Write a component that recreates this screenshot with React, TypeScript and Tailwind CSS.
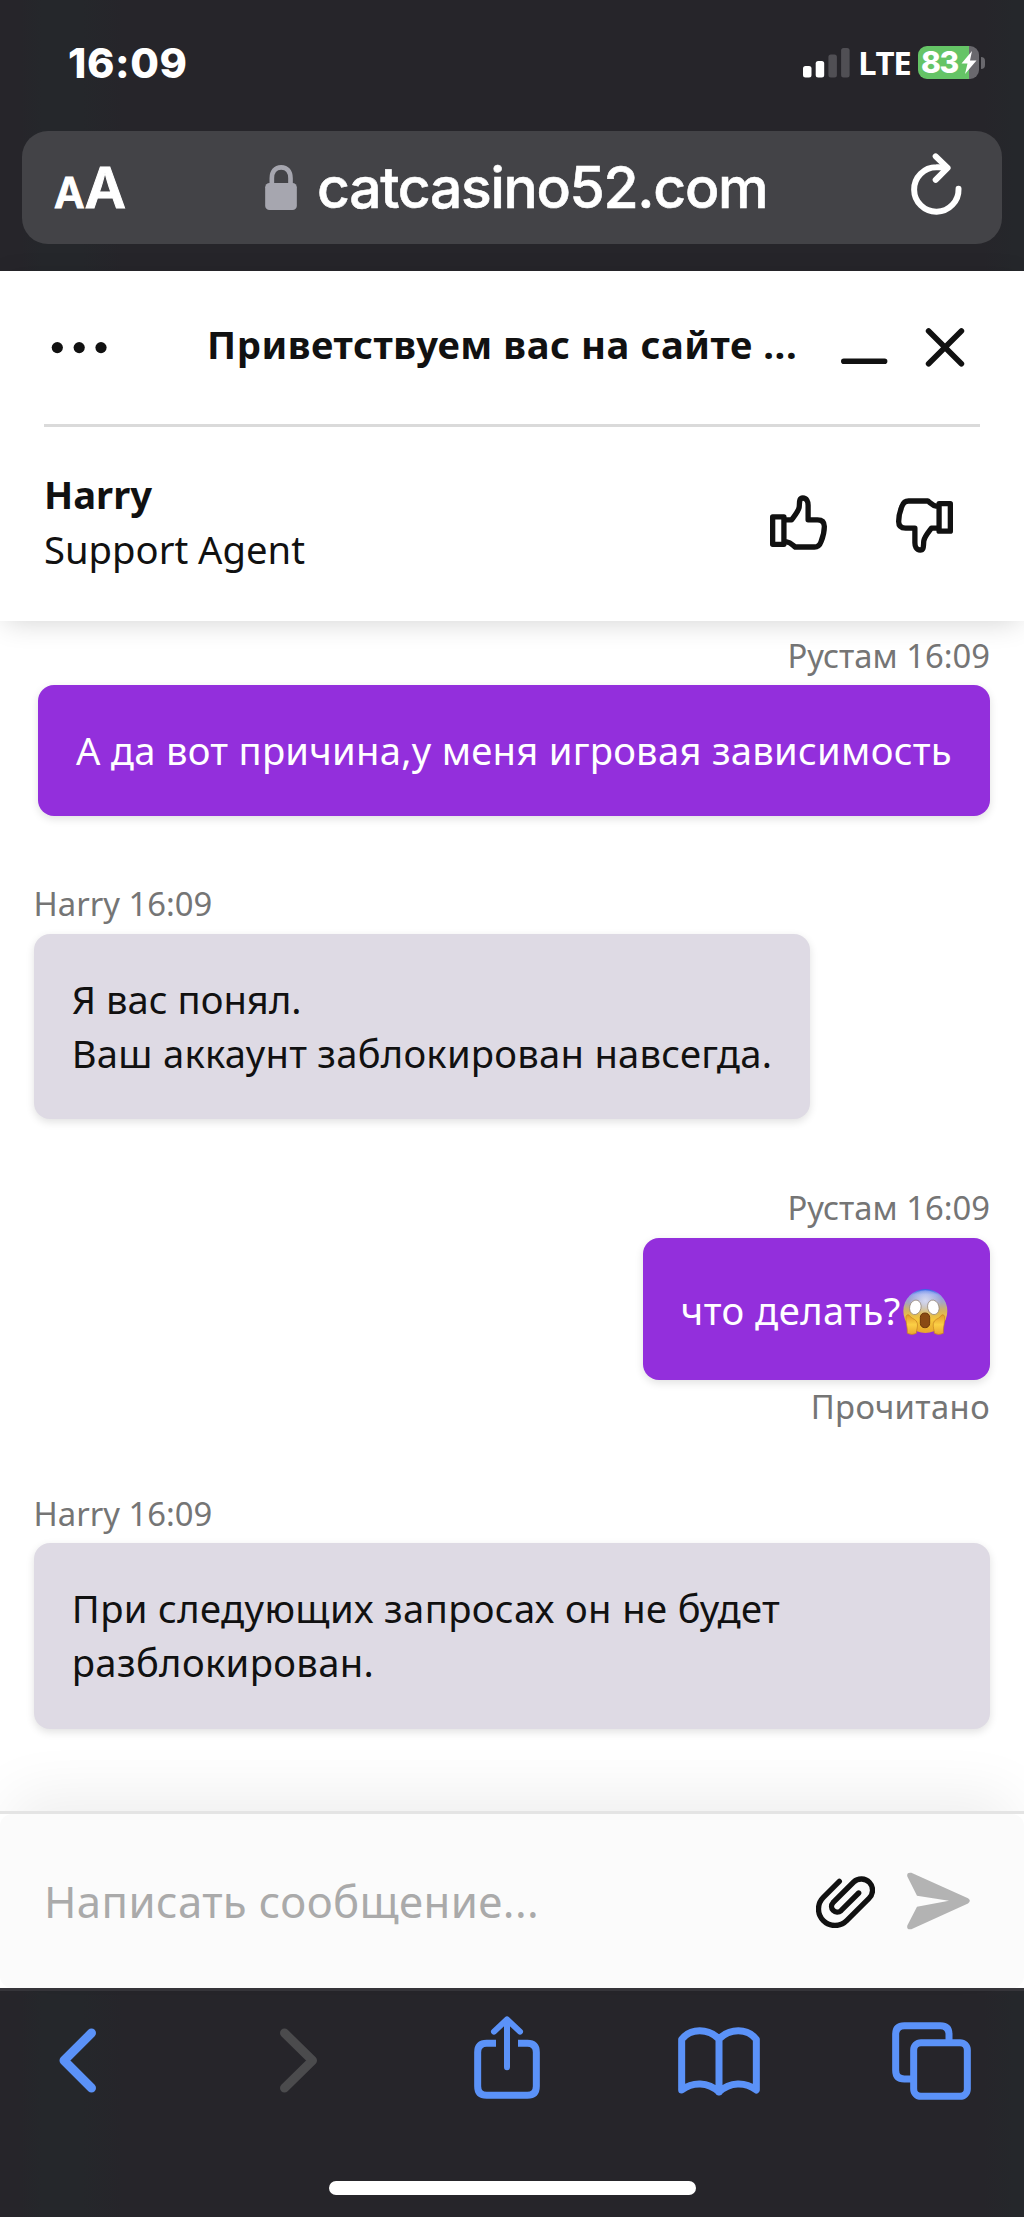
import type { ReactNode } from "react";

const chromeBg =
  "bg-[linear-gradient(to_right,#26252a_2%,#25272b_4%,#25272b_8%,#26252a_12%,#26252a_96%,#25272b_99%)]";

const StatusBar = () => (
  <div className="flex h-[131px] items-start font-['Inter',sans-serif] text-white">
    <span className="ml-[68px] mt-[38px] w-[200px] text-[41.5px] font-extrabold leading-[50px] tracking-[0.6px]">
      16:09
    </span>
    <svg className="ml-[535px] mt-12 h-[30px] w-[47px]" viewBox="0 0 47 30">
      <rect x="0" y="18" width="8.5" height="11.5" rx="2.5" fill="#fff" />
      <rect x="12.7" y="13" width="8.5" height="16.5" rx="2.5" fill="#fff" />
      <rect x="25.4" y="6.5" width="8.5" height="23" rx="2.5" fill="#504f54" />
      <rect x="38.1" y="0" width="8.5" height="29.5" rx="2.5" fill="#504f54" />
    </svg>
    <span className="ml-2 mt-[43px] w-[60px] font-['Open_Sans',sans-serif] text-[33px] font-bold leading-10 tracking-[-1.2px]">
      LTE
    </span>
    <div className="mt-[46px] flex h-[33px] w-[61px] items-center rounded-[9px] bg-[linear-gradient(to_right,#65c466_50.5px,#69686d_50.5px)]">
      <span className="ml-[3px] w-[40px] whitespace-nowrap text-[30px] font-extrabold leading-[37px] tracking-[-1.4px]">
        83
      </span>
      <svg className="h-[23px] w-4 shrink-0" viewBox="0 0 16 23">
        <path d="M11 0L0.5 12.5H6.5L4 23L15.5 9.5H9Z" fill="#fff" />
      </svg>
    </div>
    <div className="ml-[2px] mt-[57px] h-3 w-1 rounded-r-full bg-[#69686d]" />
  </div>
);

const AddressBar = () => (
  <div className="mx-[22px] flex h-[113px] items-start rounded-[26px] bg-[#434347] font-['Inter',sans-serif] text-white">
    <div className="ml-8 mt-[21px] flex w-[211px] items-baseline font-semibold leading-[72px]">
      <span className="text-[42px] [-webkit-text-stroke:1px_#fff]">A</span>
      <span className="text-[57px] [-webkit-text-stroke:1px_#fff]">A</span>
    </div>
    <svg className="mt-[34px] h-[45px] w-8" viewBox="0 0 95 135">
      <rect y="54" width="95" height="81" rx="13" fill="#a6a6af" />
      <path
        d="M20 60V40C20 20 30 7 48 7S76 20 76 40V60"
        fill="none"
        stroke="#a6a6af"
        strokeWidth="14"
      />
    </svg>
    <span className="ml-5 mt-[22px] w-[460px] whitespace-nowrap text-[57px] font-medium leading-[70px] tracking-[-1.3px] [-webkit-text-stroke:0.6px_#fff]">
      catcasino52.com
    </span>
    <svg
      className="ml-[134px] mt-[22px] h-[62px] w-[51px]"
      viewBox="0 0 153 187"
      fill="none"
      stroke="#fff"
      strokeWidth="18"
      strokeLinecap="round"
      strokeLinejoin="round"
    >
      <path d="M143 108A67 67 0 1 1 76 43Q92 42 106 45" />
      <path d="M74 10L110 45L74 81" />
    </svg>
  </div>
);

const ThumbIcon = ({ className }: { className: string }) => (
  <svg
    className={className}
    viewBox="0 0 172 164"
    fill="none"
    stroke="#111"
    strokeWidth="16"
    strokeLinejoin="round"
  >
    <rect x="8" y="65" width="34" height="83" />
    <path d="M46 74H65C74 62 86 48 88 36C90 24 86 8 99 8C111 8 115 20 115 30V74H143C159 74 164 82 164 94C164 106 159 128 154 140C150 152 144 156 134 156H76C68 150 64 142 48 140" />
  </svg>
);

const ChatHeader = () => (
  <header className="relative z-10 h-[350px] bg-white px-11 text-[38.2px] leading-[54.6px] text-[#111] shadow-[0_5px_27px_-5px_rgba(0,0,0,0.19)]">
    <div className="flex h-[156px] items-start border-b-[3px] border-[#dadada]">
      <svg className="ml-[7px] mt-[71px] h-3 w-14" viewBox="0 0 56 12" fill="#111">
        <circle cx="6.3" cy="5.6" r="5.6" />
        <circle cx="28.2" cy="5.6" r="5.6" />
        <circle cx="50" cy="5.6" r="5.6" />
      </svg>
      <h1 className="ml-[100px] mt-[46px] w-[600px] whitespace-nowrap font-bold tracking-[0.55px]">
        Приветствуем вас на сайте ...
      </h1>
      <svg
        className="ml-[34px] mt-[56px] h-10 w-[124px]"
        viewBox="0 0 124 40"
        fill="none"
        stroke="#111"
        strokeWidth="5.6"
        strokeLinecap="round"
      >
        <path d="M2.8 34.2H43.6M87.6 4L120.4 36.8M120.4 4L87.6 36.8" />
      </svg>
    </div>
    <div className="flex items-start justify-between pt-10">
      <div>
        <p className="font-bold">Harry</p>
        <p>Support Agent</p>
      </div>
      <div className="mr-[27px] mt-7 flex gap-[69px]">
        <ThumbIcon className="h-[55px] w-[57px]" />
        <ThumbIcon className="mt-[3px] h-[55px] w-[57px] rotate-180" />
      </div>
    </div>
  </header>
);

const ScreamEmoji = () => (
  <svg className="ml-[2px] mr-1 mt-2 h-[48px] w-[45px]" viewBox="0 0 135 144">
    <defs>
      <linearGradient id="face" x1="0" y1="0" x2="0" y2="1">
        <stop offset="0" stopColor="#2f62e8" />
        <stop offset="0.13" stopColor="#8f9fe6" />
        <stop offset="0.3" stopColor="#a5a6c2" />
        <stop offset="0.5" stopColor="#d6b45c" />
        <stop offset="0.7" stopColor="#f6c83c" />
        <stop offset="1" stopColor="#e8a52c" />
      </linearGradient>
      <radialGradient id="shine" cx="0.5" cy="0.25" r="0.4">
        <stop offset="0" stopColor="#dfe3f8" stopOpacity="0.85" />
        <stop offset="1" stopColor="#dfe3f8" stopOpacity="0" />
      </radialGradient>
      <linearGradient id="hand" x1="0" y1="0" x2="0" y2="1">
        <stop offset="0" stopColor="#e2962a" />
        <stop offset="0.5" stopColor="#fbcf45" />
        <stop offset="1" stopColor="#e9a730" />
      </linearGradient>
    </defs>
    <circle cx="67" cy="69" r="66" fill="url(#face)" />
    <circle cx="67" cy="69" r="62" fill="url(#shine)" />
    <ellipse cx="37" cy="58" rx="17" ry="22" fill="#fff" stroke="#8b7a6c" strokeWidth="2" transform="rotate(14 37 58)" />
    <ellipse cx="91" cy="58" rx="17" ry="22" fill="#fff" stroke="#8b7a6c" strokeWidth="2" transform="rotate(-14 91 58)" />
    <rect x="52" y="75" width="28" height="44" rx="13" fill="#8a4a14" stroke="#6e370c" strokeWidth="3" />
    <g fill="url(#hand)" stroke="#c47d20" strokeWidth="2">
      <path d="M13 136C14 116 7 101 9 86C12 78 18 79 22 86C28 93 41 94 43 106C45 118 40 126 40 136Q27 143 13 136Z" />
      <path d="M121 136C120 116 127 101 125 86C122 78 116 79 112 86C106 93 93 94 91 106C89 118 94 126 94 136Q107 143 121 136Z" />
    </g>
  </svg>
);

interface MessageProps {
  author: string;
  own?: boolean;
  status?: string;
  className?: string;
  children: ReactNode;
}

const Message = ({ author, own, status, className = "", children }: MessageProps) => (
  <div className={`flex flex-col ${own ? "items-end" : "items-start"} ${className}`}>
    <span className="mb-[5.3px] text-[32.77px] leading-[48px] text-[#757575]">
      {author} 16:09
    </span>
    <div
      className={`rounded-2xl px-[38.2px] pb-[38.6px] pt-[37.9px] shadow-[0_3px_8px_rgba(0,0,0,0.12)] ${
        own ? "bg-[#932fdc] text-white" : "bg-[#dedae4] text-[#111]"
      }`}
    >
      {children}
    </div>
    {status && (
      <span className="mt-[3.5px] text-[32.77px] leading-[48px] tracking-[0.4px] text-[#757575]">
        {status}
      </span>
    )}
  </div>
);

const Composer = () => (
  <div className="relative z-10 h-[177px] border-t-[3px] border-[#e4e4e4] bg-white shadow-[0_-27px_60px_-12px_rgba(0,0,0,0.07)]">
    <div className="flex h-[174px] items-start rounded-xl bg-[#fbfbfb]">
      <span className="ml-11 mt-[57px] w-[772px] text-[43.7px] leading-[60px] tracking-[0.4px] text-[#aaa]">
        Написать сообщение...
      </span>
      <svg
        className="mt-[62px] h-[52px] w-[59px]"
        viewBox="0 0 177 156"
        fill="none"
        stroke="#111"
        strokeWidth="16"
        strokeLinecap="round"
      >
        <path d="M70 16L22 64A49 49 0 0 0 92 134L159 67A33 33 0 0 0 113 18L51 80A17 17 0 0 0 75 104L128 51" />
      </svg>
      <svg className="ml-[32px] mt-[58px] h-[58px] w-[63px]" viewBox="0 0 189 173">
        <path
          d="M13 2L183 78Q194 86 183 94L13 171Q-2 174 1 160L30 104L126 86L30 71L1 13Q-2 0 13 2Z"
          fill="#b3b3b3"
        />
      </svg>
    </div>
  </div>
);

const Toolbar = () => (
  <nav className={`h-[229px] border-t-[3px] border-[#36353a] ${chromeBg}`}>
    <div className="flex h-[190px] items-start text-[#5b92f8]">
      <svg
        className="ml-[59px] mt-[37px] h-[65px] w-[37px]"
        viewBox="0 0 37 65"
        fill="none"
        stroke="currentColor"
        strokeWidth="9"
        strokeLinecap="round"
        strokeLinejoin="round"
      >
        <path d="M32.5 5L5 32.5L32.5 60" />
      </svg>
      <svg
        className="ml-[184px] mt-[37px] h-[65px] w-[37px] text-[#4b4b4d]"
        viewBox="0 0 37 65"
        fill="none"
        stroke="currentColor"
        strokeWidth="9"
        strokeLinecap="round"
        strokeLinejoin="round"
      >
        <path d="M4.5 5L32.5 32.5L4.5 60" />
      </svg>
      <svg
        className="ml-[157px] mt-[25px] h-[83px] w-[66px]"
        viewBox="0 0 198 249"
        fill="none"
        stroke="currentColor"
        strokeWidth="21"
      >
        <path d="M66 82H38Q11 82 11 109V211Q11 238 38 238H160Q187 238 187 211V109Q187 82 160 82H132" />
        <path d="M60 47L99 10L138 47M99 12V154" strokeWidth="18" strokeLinecap="round" strokeLinejoin="round" />
      </svg>
      <svg
        className="ml-[138px] mt-9 h-[69px] w-[82px]"
        viewBox="0 0 246 207"
        fill="none"
        stroke="currentColor"
        strokeWidth="21"
        strokeLinecap="round"
        strokeLinejoin="round"
      >
        <path d="M123 36C90 3 38 3 11 37V189C44 164 90 164 123 195C156 164 202 164 235 189V37C208 3 156 3 123 36V195" />
      </svg>
      <svg
        className="ml-[132px] mt-[31px] h-[78px] w-[79px]"
        viewBox="0 0 237 234"
        fill="none"
        stroke="currentColor"
        strokeWidth="21"
      >
        <rect x="65" y="62" width="161" height="161" rx="22" />
        <path d="M65 171H37Q11 171 11 145V37Q11 11 37 11H145Q171 11 171 37V62" />
      </svg>
    </div>
    <div className="mx-auto h-[14px] w-[367px] rounded-full bg-white" />
  </nav>
);

export default function App() {
  return (
    <div className="flex h-[2217px] w-[1024px] flex-col overflow-hidden bg-white font-['Noto_Sans',sans-serif]">
      <div className={`h-[271px] shrink-0 ${chromeBg}`}>
        <StatusBar />
        <AddressBar />
      </div>
      <ChatHeader />
      <main className="h-[1190px] pl-[33.6px] pr-[34px] pt-[10.7px] text-[38.2px] leading-[54.6px]">
        <Message author="Рустам" own>
          <p className="whitespace-nowrap tracking-[0.26px]">
            А да вот причина,у меня игровая зависимость
          </p>
        </Message>
        <Message author="Harry" className="mt-[64.3px]">
          <p>Я вас понял.</p>
          <p className="tracking-[0.25px]">Ваш аккаунт заблокирован навсегда.</p>
        </Message>
        <Message author="Рустам" own status="Прочитано" className="mt-[65px]">
          <p className="flex h-[65.5px] items-center whitespace-nowrap">
            <span className="mt-[5px] tracking-[0.45px]">что делать?</span>
            <ScreamEmoji />
          </p>
        </Message>
        <Message author="Harry" className="mt-[58.5px]">
          <p className="tracking-[0.36px]">
            При следующих запросах он не будет разблокирован.
          </p>
        </Message>
      </main>
      <Composer />
      <Toolbar />
    </div>
  );
}
